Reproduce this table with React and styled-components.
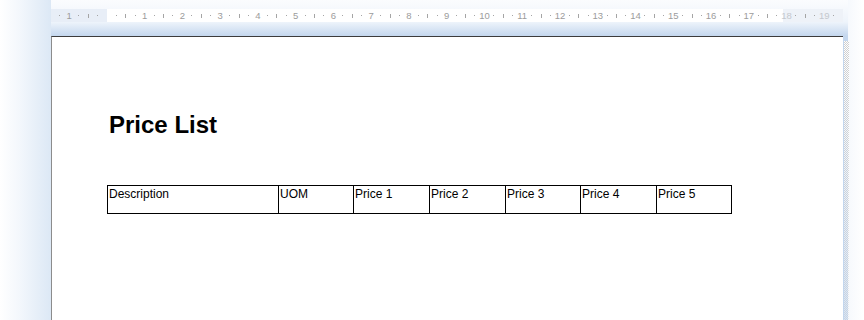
import React from "react";
import styled, { createGlobalStyle } from "styled-components";

const GlobalStyle = createGlobalStyle`
  html, body {
    margin: 0;
    padding: 0;
    background: #ffffff;
    font-family: "Liberation Sans", Arial, sans-serif;
  }
`;

const CM = 37.8;
const Q = CM / 4;

const Workspace = styled.div`
  width: 864px;
  height: 320px;
  overflow: hidden;
  display: flex;
  flex-direction: column;
  background:
    linear-gradient(to right, #ffffff 0px, #f3f7fc 20px, #dce8f5 51px, rgba(255,255,255,0) 51px),
    linear-gradient(to left, #ffffff 0px, #f6f9fd 16px, rgba(255,255,255,0) 16px),
    linear-gradient(to bottom, #fbfcfe 0px, #eef4fb 22px, #c4d7ee 36px);
`;

const RulerRow = styled.div`
  margin-top: 9px;
  margin-left: 51px;
  width: 792px;
  height: 13px;
  box-sizing: border-box;
  padding-left: 4px;
  display: flex;
  align-items: center;
  overflow: hidden;
  background: linear-gradient(
    to right,
    #e8eef7 0px,
    #e8eef7 56px,
    #ffffff 56px,
    #ffffff 732px,
    #eef2f8 732px
  );
`;

const Slot = styled.div`
  flex: 0 0 ${Q}px;
  width: ${Q}px;
  height: 13px;
  display: flex;
  align-items: center;
  justify-content: center;
  font-size: 9.5px;
  line-height: 13px;
  color: ${(p) => (p.$faded ? "#c4c8ce" : "#9c9c9c")};
`;

const Dot = styled.span`
  width: 1px;
  height: 1px;
  background: #a5a5a5;
`;

const Tick = styled.span`
  width: 1px;
  height: 4px;
  background: #a5a5a5;
`;

const Band = styled.div`
  height: 14px;
  flex: 0 0 14px;
`;

const Page = styled.div`
  position: relative;
  margin-left: 51px;
  width: 792px;
  flex: 1;
  box-sizing: border-box;
  background: #ffffff;
  border-top: 1px solid #3c3c3c;
  border-left: 1px solid #8c8c8c;
  padding: 74px 0 0 55px;

  &::after {
    content: "";
    position: absolute;
    top: 4px;
    right: -6px;
    width: 5px;
    bottom: 0;
    background-image: repeating-conic-gradient(#cfcfcf 0 25%, #ffffff 0 50%);
    background-size: 2px 2px;
    -webkit-mask-image: linear-gradient(to bottom, #000 0%, rgba(0,0,0,0.35) 100%);
    mask-image: linear-gradient(to bottom, #000 0%, rgba(0,0,0,0.35) 100%);
  }
`;

const Title = styled.h1`
  margin: 0 0 46px 2px;
  font-size: 24px;
  font-weight: bold;
  line-height: 28px;
  color: #000000;
`;

const Table = styled.div`
  display: grid;
  grid-template-columns: 171px 75px 76px 76px 75px 76px 75px;
  width: 625px;
  box-sizing: border-box;
  border-top: 1px solid #000;
  border-bottom: 1px solid #000;
  border-right: 1px solid #000;
`;

const Cell = styled.div`
  height: 27px;
  box-sizing: border-box;
  border-left: 1px solid #000;
  padding: 1px 0 0 1px;
  font-size: 12px;
  line-height: 14px;
  color: #000;
`;

const columns = ["Description", "UOM", "Price 1", "Price 2", "Price 3", "Price 4", "Price 5"];

const Ruler = () => {
  const slots = [];
  for (let k = -5; k <= 78; k++) {
    const m = ((k % 4) + 4) % 4;
    let content = null;
    if (m === 0) {
      content = k === 0 ? null : Math.abs(k / 4);
    } else if (m === 2) {
      content = <Tick />;
    } else {
      content = <Dot />;
    }
    slots.push(
      <Slot key={k} $faded={k >= 72}>
        {content}
      </Slot>
    );
  }
  return <RulerRow>{slots}</RulerRow>;
};

const App = () => {
  return (
    <>
      <GlobalStyle />
      <Workspace>
        <Ruler />
        <Band />
        <Page>
          <Title>Price List</Title>
          <Table>
            {columns.map((c) => (
              <Cell key={c}>{c}</Cell>
            ))}
          </Table>
        </Page>
      </Workspace>
    </>
  );
};

export default App;
